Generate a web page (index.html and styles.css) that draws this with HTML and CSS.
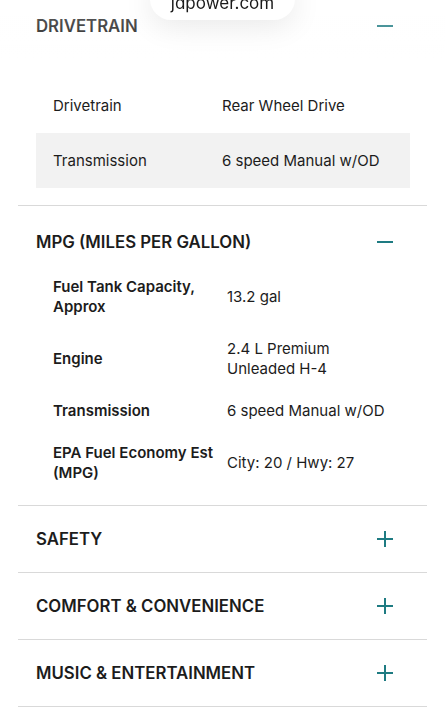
FILE: index.html
```html
<!DOCTYPE html>
<html lang="en">
<head>
    <meta charset="UTF-8">
    <meta name="viewport" content="width=device-width, initial-scale=1.0">
    <title>Specifications</title>
    <link rel="stylesheet" href="styles.css">
</head>
<body>
    <div class="url-pill">jdpower.com</div>
    <div class="top-fade"></div>

    <main class="specs">
        <section class="spec-group first open">
            <div class="group-header">
                <span class="group-title">DRIVETRAIN</span>
                <span class="toggle minus"></span>
            </div>
            <div class="spec-table plain">
                <div class="spec-row">
                    <div class="spec-label">Drivetrain</div>
                    <div class="spec-value">Rear Wheel Drive</div>
                </div>
                <div class="spec-row shaded">
                    <div class="spec-label">Transmission</div>
                    <div class="spec-value">6 speed Manual w/OD</div>
                </div>
            </div>
        </section>

        <section class="spec-group open">
            <div class="group-header">
                <span class="group-title">MPG (MILES PER GALLON)</span>
                <span class="toggle minus"></span>
            </div>
            <div class="spec-table bold">
                <div class="spec-row">
                    <div class="spec-label">Fuel Tank Capacity, Approx</div>
                    <div class="spec-value">13.2 gal</div>
                </div>
                <div class="spec-row">
                    <div class="spec-label">Engine</div>
                    <div class="spec-value">2.4 L Premium Unleaded H-4</div>
                </div>
                <div class="spec-row">
                    <div class="spec-label">Transmission</div>
                    <div class="spec-value">6 speed Manual w/OD</div>
                </div>
                <div class="spec-row">
                    <div class="spec-label">EPA Fuel Economy Est (MPG)</div>
                    <div class="spec-value">City: 20 / Hwy: 27</div>
                </div>
            </div>
        </section>

        <section class="spec-group">
            <div class="group-header">
                <span class="group-title">SAFETY</span>
                <span class="toggle plus"></span>
            </div>
        </section>

        <section class="spec-group">
            <div class="group-header">
                <span class="group-title">COMFORT &amp; CONVENIENCE</span>
                <span class="toggle plus"></span>
            </div>
        </section>

        <section class="spec-group">
            <div class="group-header">
                <span class="group-title">MUSIC &amp; ENTERTAINMENT</span>
                <span class="toggle plus"></span>
            </div>
        </section>
    </main>
</body>
</html>
```

FILE: styles.css
```css
body {
    font-family: Inter, "Open Sans", sans-serif;
    color: #1c1c1c;
    background: #fff;
    margin: 0;
    padding: 0;
}
.url-pill {
    position: fixed;
    top: -22px;
    left: 150px;
    width: 145px;
    height: 42px;
    line-height: 50px;
    text-align: center;
    font-size: 17px;
    color: #1a1a1a;
    background: #fff;
    border-radius: 21px;
    box-shadow: 0 6px 30px rgba(0, 0, 0, 0.09);
    z-index: 3;
}
.top-fade {
    position: fixed;
    top: 0;
    left: 0;
    right: 0;
    height: 60px;
    background: linear-gradient(rgba(255, 255, 255, 0.35), rgba(255, 255, 255, 0));
    z-index: 2;
}
.specs {
    margin: 0 18px;
}
.spec-group {
    border-bottom: 1px solid #d9d9d9;
}
.group-header {
    display: flex;
    align-items: center;
    justify-content: space-between;
    height: 66px;
    padding: 0 34px 0 18px;
}
.group-title {
    font-size: 16.8px;
    font-weight: 600;
}
.open .group-header {
    height: 60px;
    padding-top: 12px;
    box-sizing: border-box;
}
.first.open .group-header {
    height: 52px;
    padding-top: 0;
}
.toggle {
    position: relative;
    width: 16px;
    height: 16px;
}
.toggle::before,
.toggle::after {
    content: "";
    position: absolute;
    background: #1e7b82;
}
.toggle::before {
    left: 0;
    top: 7px;
    width: 16px;
    height: 2px;
}
.plus::after {
    left: 7px;
    top: 0;
    width: 2px;
    height: 16px;
}
.spec-table {
    margin: 0 17px 0 18px;
    padding-bottom: 11px;
    font-size: 15px;
    line-height: 20px;
}
.spec-table.plain {
    margin-top: 26px;
    padding-bottom: 17px;
}
.spec-row {
    display: flex;
    align-items: center;
}
.plain .spec-row {
    height: 55px;
}
.bold .spec-row {
    padding: 11px 0;
}
.spec-row.shaded {
    background: #f2f2f2;
}
.spec-label {
    flex: none;
    padding-left: 17px;
    box-sizing: border-box;
}
.plain .spec-label {
    width: 186px;
}
.bold .spec-label {
    width: 191px;
    padding-right: 10px;
    font-weight: 600;
}
.spec-value {
    flex: 1;
    padding-right: 17px;
}
```
